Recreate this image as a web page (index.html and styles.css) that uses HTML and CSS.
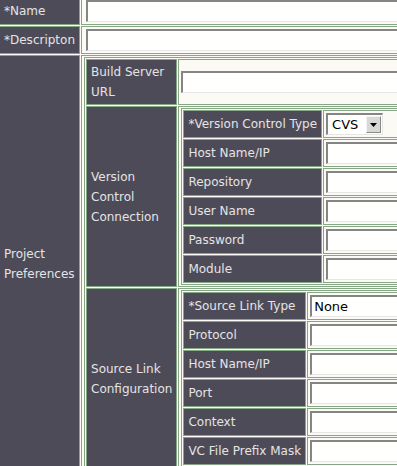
FILE: index.html
```html
<!DOCTYPE html>
<html lang="en">
<head>
    <meta charset="UTF-8">
    <title>Project</title>
    <link rel="stylesheet" href="styles.css">
</head>
<body>
    <table class="form outer">
        <tr>
            <th class="lbl">*Name</th>
            <td class="field wide-cell"><input type="text" class="wide"></td>
        </tr>
        <tr>
            <th class="lbl">*Descripton</th>
            <td class="field wide-cell"><input type="text" class="wide"></td>
        </tr>
        <tr>
            <th class="lbl">Project Preferences</th>
            <td class="nest">
                <table class="form">
                    <tr>
                        <th class="lbl">Build Server URL</th>
                        <td class="field"><input type="text" class="url"></td>
                    </tr>
                    <tr>
                        <th class="lbl">Version Control Connection</th>
                        <td class="nest">
                            <table class="form fields">
                                <tr>
                                    <th class="lbl">*Version Control Type</th>
                                    <td class="field">
                                        <span class="select cvs">
                                            <select><option>CVS</option></select>
                                            <span class="drop"><svg width="7" height="4" viewBox="0 0 7 4"><path d="M0 0H7L3.5 4Z" fill="#000"/></svg></span>
                                        </span>
                                    </td>
                                </tr>
                                <tr><th class="lbl">Host Name/IP</th><td class="field"><input type="text" class="short"></td></tr>
                                <tr><th class="lbl">Repository</th><td class="field"><input type="text" class="short"></td></tr>
                                <tr><th class="lbl">User Name</th><td class="field"><input type="text" class="short"></td></tr>
                                <tr><th class="lbl">Password</th><td class="field"><input type="password" class="short"></td></tr>
                                <tr><th class="lbl">Module</th><td class="field"><input type="text" class="short"></td></tr>
                            </table>
                        </td>
                    </tr>
                    <tr>
                        <th class="lbl">Source Link Configuration</th>
                        <td class="nest">
                            <table class="form fields">
                                <tr>
                                    <th class="lbl">*Source Link Type</th>
                                    <td class="field">
                                        <span class="select none">
                                            <select><option>None</option></select>
                                        </span>
                                    </td>
                                </tr>
                                <tr><th class="lbl">Protocol</th><td class="field"><input type="text" class="short"></td></tr>
                                <tr><th class="lbl">Host Name/IP</th><td class="field"><input type="text" class="short"></td></tr>
                                <tr><th class="lbl">Port</th><td class="field"><input type="text" class="short"></td></tr>
                                <tr><th class="lbl">Context</th><td class="field"><input type="text" class="short"></td></tr>
                                <tr><th class="lbl">VC File Prefix Mask</th><td class="field"><input type="text" class="short"></td></tr>
                            </table>
                        </td>
                    </tr>
                </table>
            </td>
        </tr>
    </table>
</body>
</html>
```

FILE: styles.css
```css
html {
    overflow: hidden;
}
body {
    margin: 0;
    background-color: #fbfaf5;
    font-family: "DejaVu Sans", sans-serif;
    font-size: 12px;
}
.form {
    border: 1px solid #86a686;
    border-spacing: 1px;
}
.outer {
    margin: -5px 0 0 -3px;
}
.form th,
.form td {
    border: 1px solid #86a686;
    padding: 2px;
}
.form .lbl {
    background-color: #4e4b59;
    color: #e4e4e4;
    font-weight: normal;
    text-align: left;
    line-height: 20px;
    padding: 2px 4px;
}
.fields .lbl {
    white-space: nowrap;
}
.form .nest {
    padding: 1px 3px 1px 2px;
}
.form .wide-cell {
    padding-left: 4px;
}
input {
    display: block;
    box-sizing: border-box;
    height: 22px;
    margin: 0;
    padding: 0 3px;
    background-color: #fffffe;
    border-top: 2px solid #858585;
    border-left: 2px solid #858585;
    border-right: 1px solid #e6e6e6;
    border-bottom: 1px solid #e6e6e6;
}
.wide {
    width: 360px;
}
.url {
    width: 260px;
}
.short {
    width: 120px;
}
.select {
    display: flex;
    align-items: center;
    box-sizing: border-box;
    height: 22px;
    background-color: #fffffe;
    border-top: 2px solid #858585;
    border-left: 2px solid #858585;
    border-right: 1px solid #e6e6e6;
    border-bottom: 1px solid #e6e6e6;
}
.select select {
    appearance: none;
    -webkit-appearance: none;
    border: none;
    background: transparent;
    font-family: "DejaVu Sans", sans-serif;
    font-size: 13px;
    color: #000;
    margin: 0;
    outline: none;
}
.cvs {
    width: 57px;
}
.cvs select {
    padding: 0 0 0 4px;
    width: 38px;
}
.none {
    width: 130px;
}
.none select {
    padding: 0 0 0 2px;
    width: 120px;
}
.drop {
    display: flex;
    align-items: center;
    justify-content: center;
    box-sizing: border-box;
    width: 15px;
    height: 17px;
    margin-left: auto;
    margin-right: 1px;
    background-color: #d8d8d4;
    border-top: 1px solid #f4f4f4;
    border-left: 1px solid #f4f4f4;
    border-right: 1px solid #8a8a8a;
    border-bottom: 1px solid #8a8a8a;
}
```
